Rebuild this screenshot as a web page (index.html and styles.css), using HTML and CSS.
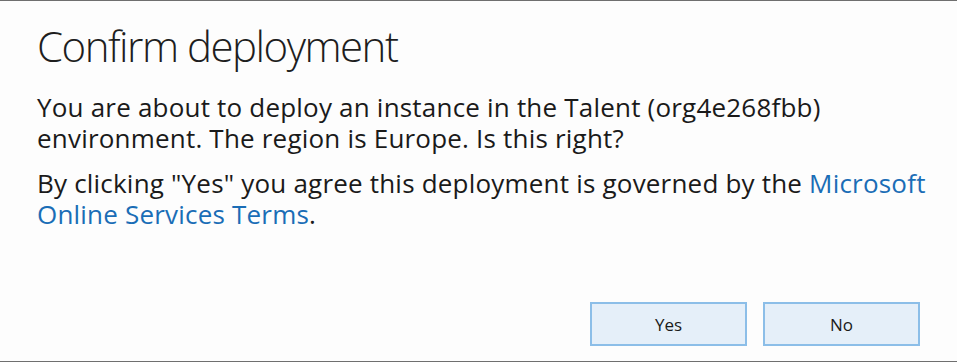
FILE: index.html
```html
<!DOCTYPE html>
<html lang="en">
<head>
  <meta charset="UTF-8" />
  <meta name="viewport" content="width=device-width,initial-scale=1.0" />
  <title>Confirm deployment</title>
  <link rel="stylesheet" href="styles.css">
</head>
<body>
  <div class="dialog">
    <h1 class="dialog-title">Confirm deployment</h1>
    <p class="dialog-text first">You are about to deploy an instance in the Talent (org4e268fbb) environment. The region is Europe. Is this right?</p>
    <p class="dialog-text">By clicking "Yes" you agree this deployment is governed by the <a href="#" class="terms-link">Microsoft Online Services Terms</a>.</p>
    <div class="dialog-actions">
      <button class="dialog-btn">Yes</button>
      <button class="dialog-btn">No</button>
    </div>
  </div>
</body>
</html>
```

FILE: styles.css
```css
body {
  margin: 0;
  background: #fdfdfd;
  font-family: 'Open Sans', 'Noto Sans', Arial, sans-serif;
}
.dialog {
  box-sizing: border-box;
  height: 362px;
  border-top: 1px solid #6f6f6f;
  border-bottom: 1px solid #6f6f6f;
  background: #fdfdfd;
  padding: 17px 18px 15px 37px;
  display: flex;
  flex-direction: column;
}
.dialog-title {
  margin: 0;
  font-size: 42px;
  font-weight: 300;
  letter-spacing: -1.5px;
  line-height: 56px;
  color: #1e1e1e;
}
.dialog-text {
  margin: 14px 0 0 0;
  font-size: 26px;
  letter-spacing: 0.2px;
  line-height: 31px;
  color: #1a1a1a;
}
.dialog-text.first {
  margin-top: 18px;
}
.terms-link {
  color: #1a6db6;
  text-decoration: none;
}
.dialog-actions {
  margin-top: auto;
  padding-right: 19px;
  display: flex;
  justify-content: flex-end;
  gap: 16px;
}
.dialog-btn {
  box-sizing: border-box;
  width: 157px;
  height: 44px;
  border: 2px solid #8cbee8;
  background: #e5eff9;
  font-family: 'Open Sans', 'Noto Sans', Arial, sans-serif;
  font-size: 17px;
  color: #1a1a1a;
  padding: 0;
  cursor: pointer;
}
```
